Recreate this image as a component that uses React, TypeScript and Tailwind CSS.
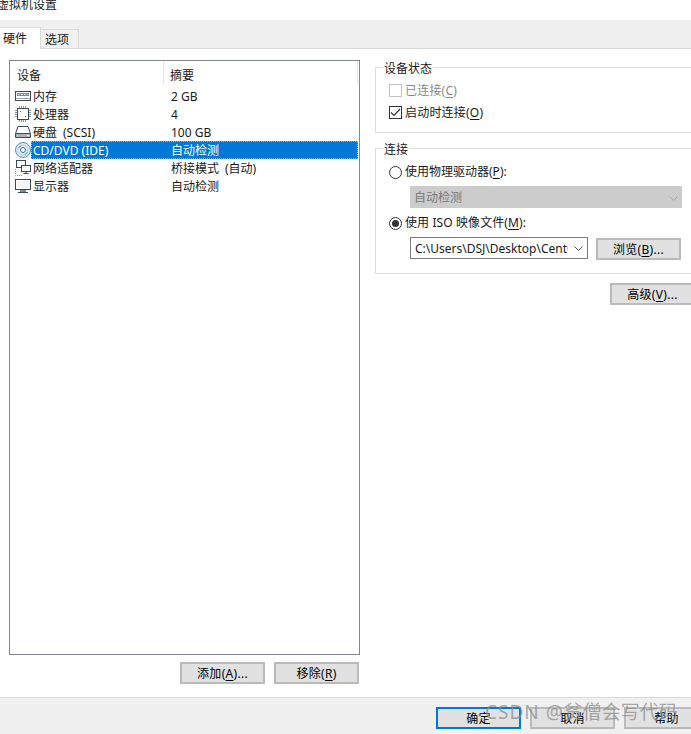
import React from 'react';

const FONT = "font-['Noto_Sans','Noto_Sans_CJK_SC',sans-serif]";

const MemoryIcon = () => (
  <svg width="16" height="16" viewBox="0 0 16 16" fill="none">
    <rect x="0.5" y="3.5" width="15" height="9" fill="#fff" stroke="#3c4a55" />
    <rect x="2" y="5" width="12" height="3" fill="#7d8b96" />
    <path d="M3 6.500h2M6 6.500h2M9 6.500h2M12 6.500h1" stroke="#dfe5ea" />
    <path d="M1 10.500h14" stroke="#9aa5ad" />
  </svg>
);

const CpuIcon = () => (
  <svg width="16" height="16" viewBox="0 0 16 16" fill="none">
    <rect x="2.500" y="2.500" width="11" height="11" fill="#fff" stroke="#3c4a55" />
    <path d="M0 4.500h2M0 6.500h2M0 8.500h2M0 10.500h2M14 4.500h2M14 6.500h2M14 8.500h2M14 10.500h2M4.500 0v2M6.500 0v2M8.500 0v2M10.500 0v2M4.500 14v2M6.500 14v2M8.500 14v2M10.500 14v2" stroke="#8b97a0" />
    <rect x="5" y="5" width="1" height="1" fill="#3c4a55" />
    <rect x="10" y="10" width="1" height="1" fill="#3c4a55" />
  </svg>
);

const DiskIcon = () => (
  <svg width="16" height="16" viewBox="0 0 16 16" fill="none">
    <path d="M3 2.500h10l2.500 7v4H0.500v-4z" fill="#fff" stroke="#3c4a55" />
    <path d="M1 9.500h14" stroke="#3c4a55" />
    <rect x="1" y="10" width="14" height="3" fill="#aab4bb" />
    <rect x="12" y="11" width="2" height="1" fill="#fff" />
  </svg>
);

const CdIcon = () => (
  <svg width="16" height="16" viewBox="0 0 16 16" fill="none">
    <circle cx="8" cy="8" r="7.500" fill="#d9ebf7" stroke="#5c8fb3" />
    <circle cx="8" cy="8" r="5" fill="#f4f9fc" stroke="#a9cde3" />
    <circle cx="8" cy="8" r="2.500" fill="#fff" stroke="#2f6d99" />
    <path d="M3.500 6 6 3.500M10 12.500 12.500 10" stroke="#3f94cf" />
  </svg>
);

const NetworkIcon = () => (
  <svg width="16" height="16" viewBox="0 0 16 16" fill="none">
    <rect x="1.500" y="0.500" width="9" height="7" fill="#fff" stroke="#3c4a55" />
    <rect x="6.500" y="5.500" width="9" height="6" fill="#fff" stroke="#3c4a55" />
    <path d="M11 11.500v2M8.500 13.500h5" stroke="#3c4a55" />
    <path d="M0.500 9v6.500h7" stroke="#8b97a0" strokeDasharray="1 1" />
  </svg>
);

const MonitorIcon = () => (
  <svg width="16" height="16" viewBox="0 0 16 16" fill="none">
    <rect x="0.500" y="1.500" width="15" height="10" fill="#fff" stroke="#3c4a55" />
    <rect x="2" y="3" width="12" height="7" fill="#f3f5f7" />
    <rect x="5" y="12" width="6" height="2" fill="#7d8b96" />
    <path d="M3 14.500h10" stroke="#3c4a55" />
  </svg>
);

const Chevron = ({ color }: { color: string }) => (
  <svg width="9" height="5" viewBox="0 0 9 5" fill="none" className="shrink-0">
    <path d="M0.500 0.500 4.500 4.500 8.500 0.500" stroke={color} />
  </svg>
);

const Key = ({ children }: { children: React.ReactNode }) => (
  <span className="underline underline-offset-2">{children}</span>
);

const rows = [
  { name: '内存', value: '2 GB', icon: <MemoryIcon /> },
  { name: '处理器', value: '4', icon: <CpuIcon /> },
  { name: '硬盘\u2002(SCSI)', value: '100 GB', icon: <DiskIcon /> },
  { name: 'CD/DVD (IDE)', value: '自动检测', icon: <CdIcon />, selected: true },
  { name: '网络适配器', value: '桥接模式\u2002(自动)', icon: <NetworkIcon /> },
  { name: '显示器', value: '自动检测', icon: <MonitorIcon /> },
];

const Button = ({ children, className = 'border-[#bababa]' }: { children: React.ReactNode; className?: string }) => (
  <div className={`flex h-[22px] w-[85px] shrink-0 items-center justify-center border-2 bg-[#e1e1e1] pt-[2px] tracking-[0.3px] text-black ${className}`}>
    {children}
  </div>
);

const Group = ({ title, className, children }: { title: string; className: string; children: React.ReactNode }) => (
  <div className={`relative w-[320px] border border-[#dcdcdc] ${className}`}>
    <span className="absolute left-[7px] top-[-8px] bg-white px-px leading-[18px]">{title}</span>
    {children}
  </div>
);

const Radio = ({ checked }: { checked?: boolean }) => (
  <span className="flex h-[13px] w-[13px] shrink-0 items-center justify-center rounded-full border border-[#333] bg-white">
    {checked && <span className="h-[7px] w-[7px] rounded-full bg-[#333]" />}
  </span>
);

export default function App() {
  return (
    <div className={`relative flex h-[734px] w-[691px] flex-col overflow-hidden bg-white text-[12px] leading-[18px] text-[#1a1a1a] ${FONT}`}>
      <div className="h-[20px] shrink-0 overflow-hidden">
        <div className="ml-[-3px] mt-[-4px] leading-[18px]">虚拟机设置</div>
      </div>

      <div className="flex h-[29px] shrink-0 items-end border-b border-[#d9d9d9] bg-[#f0f0f0]">
        <div className="mb-[-1px] flex h-[22px] w-[41px] items-center border-r border-t border-[#d9d9d9] bg-white pl-[3px]">硬件</div>
        <div className="flex h-[19px] w-[38px] items-center border-r border-t border-[#d9d9d9] pl-[4px] pt-[2px] text-[#1a1a1a]">选项</div>
      </div>

      <div className="flex flex-1 pl-[9px] pt-[11px]">
        <div className="w-[351px] shrink-0">
          <div className="h-[595px] border border-[#828790] bg-white">
            <div className="flex h-[26px]">
              <div className="flex h-[24px] w-[154px] items-center border-r border-[#e5e5e5] pl-[7px] pt-[6px]">设备</div>
              <div className="flex h-[24px] w-[194px] items-center border-r border-[#e5e5e5] pl-[6px] pt-[6px]">摘要</div>
            </div>
            {rows.map(row => (
              <div key={row.name} className="flex h-[18px] items-center">
                <div className="flex h-[16px] w-[21px] shrink-0 items-center pl-[5px]">{row.icon}</div>
                <div className={`flex h-[18px] w-[327px] items-center pt-px ${row.selected ? 'border border-dotted border-[#f5a623] bg-[#0078d7] text-white' : 'border border-transparent'}`}>
                  <span className="w-[139px] shrink-0 pl-px">{row.name}</span>
                  <span>{row.value}</span>
                </div>
              </div>
            ))}
          </div>
          <div className="mr-px mt-[7px] flex justify-end gap-[9px]">
            <Button>添加(<Key>A</Key>)...</Button>
            <Button>移除(<Key>R</Key>)</Button>
          </div>
        </div>

        <div className="ml-[15px] flex flex-col pt-[7px]">
          <Group title="设备状态" className="h-[66px] pl-[13px] pt-[15px]">
            <div className="flex h-[14px] items-center gap-[3px] text-[#8a8a8a]">
              <span className="h-[13px] w-[13px] border border-[#c4c4c4] bg-white" />
              <span className="pt-px tracking-[0.2px]">已连接(<Key>C</Key>)</span>
            </div>
            <div className="mt-[8px] flex h-[14px] items-center gap-[3px]">
              <span className="flex h-[13px] w-[13px] items-center justify-center border border-[#333] bg-white">
                <svg width="11" height="9" viewBox="0 0 11 9" fill="none">
                  <path d="M1 4.500 4 7.500 10 1" stroke="#333" strokeWidth="1.200" />
                </svg>
              </span>
              <span className="pt-px tracking-[0.2px]">启动时连接(<Key>O</Key>)</span>
            </div>
          </Group>

          <Group title="连接" className="mt-[15px] h-[126px] pl-[13px] pt-[16px]">
            <div className="flex h-[14px] items-center gap-[3px]">
              <Radio />
              <span>使用物理驱动器(<Key>P</Key>):</span>
            </div>
            <div className="ml-[21px] mt-[7px] flex h-[22px] w-[272px] items-center justify-between bg-[#cccccc] pl-[4px] pr-[4px] pt-[2px] text-[#7a7a7a]">
              <span>自动检测</span>
              <Chevron color="#a8a8a8" />
            </div>
            <div className="mt-[8px] flex h-[14px] items-center gap-[3px]">
              <Radio checked />
              <span className="tracking-[0.1px]">使用 ISO 映像文件(<Key>M</Key>):</span>
            </div>
            <div className="ml-[21px] mt-[7px] flex items-start gap-[8px]">
              <div className="flex h-[22px] w-[178px] items-center justify-between border border-[#7a7a7a] bg-white pl-[4px] pr-[4px] pt-px">
                <span className="w-[153px] overflow-hidden whitespace-nowrap">C:\Users\DSJ\Desktop\CentOS</span>
                <Chevron color="#555" />
              </div>
              <Button className="mt-px border-[#bababa]">浏览(<Key>B</Key>)...</Button>
            </div>
          </Group>

          <Button className="ml-auto mt-[9px] border-[#bababa]">高级(<Key>V</Key>)...</Button>
        </div>
      </div>

      <div className="flex h-[37px] shrink-0 justify-start gap-[9px] border-t border-[#d9d9d9] bg-[#f0f0f0] pl-[436px] pt-[9px]">
        <Button className="border-[#0078d7]">确定</Button>
        <Button>取消</Button>
        <Button>帮助</Button>
      </div>

      <div className="absolute left-[485px] top-[700px] whitespace-nowrap text-[19px] leading-[24px] text-[#8c8c8c]/75">
        <span className="tracking-[1px]">CSDN @</span>贫僧会写代码
      </div>
    </div>
  );
}
